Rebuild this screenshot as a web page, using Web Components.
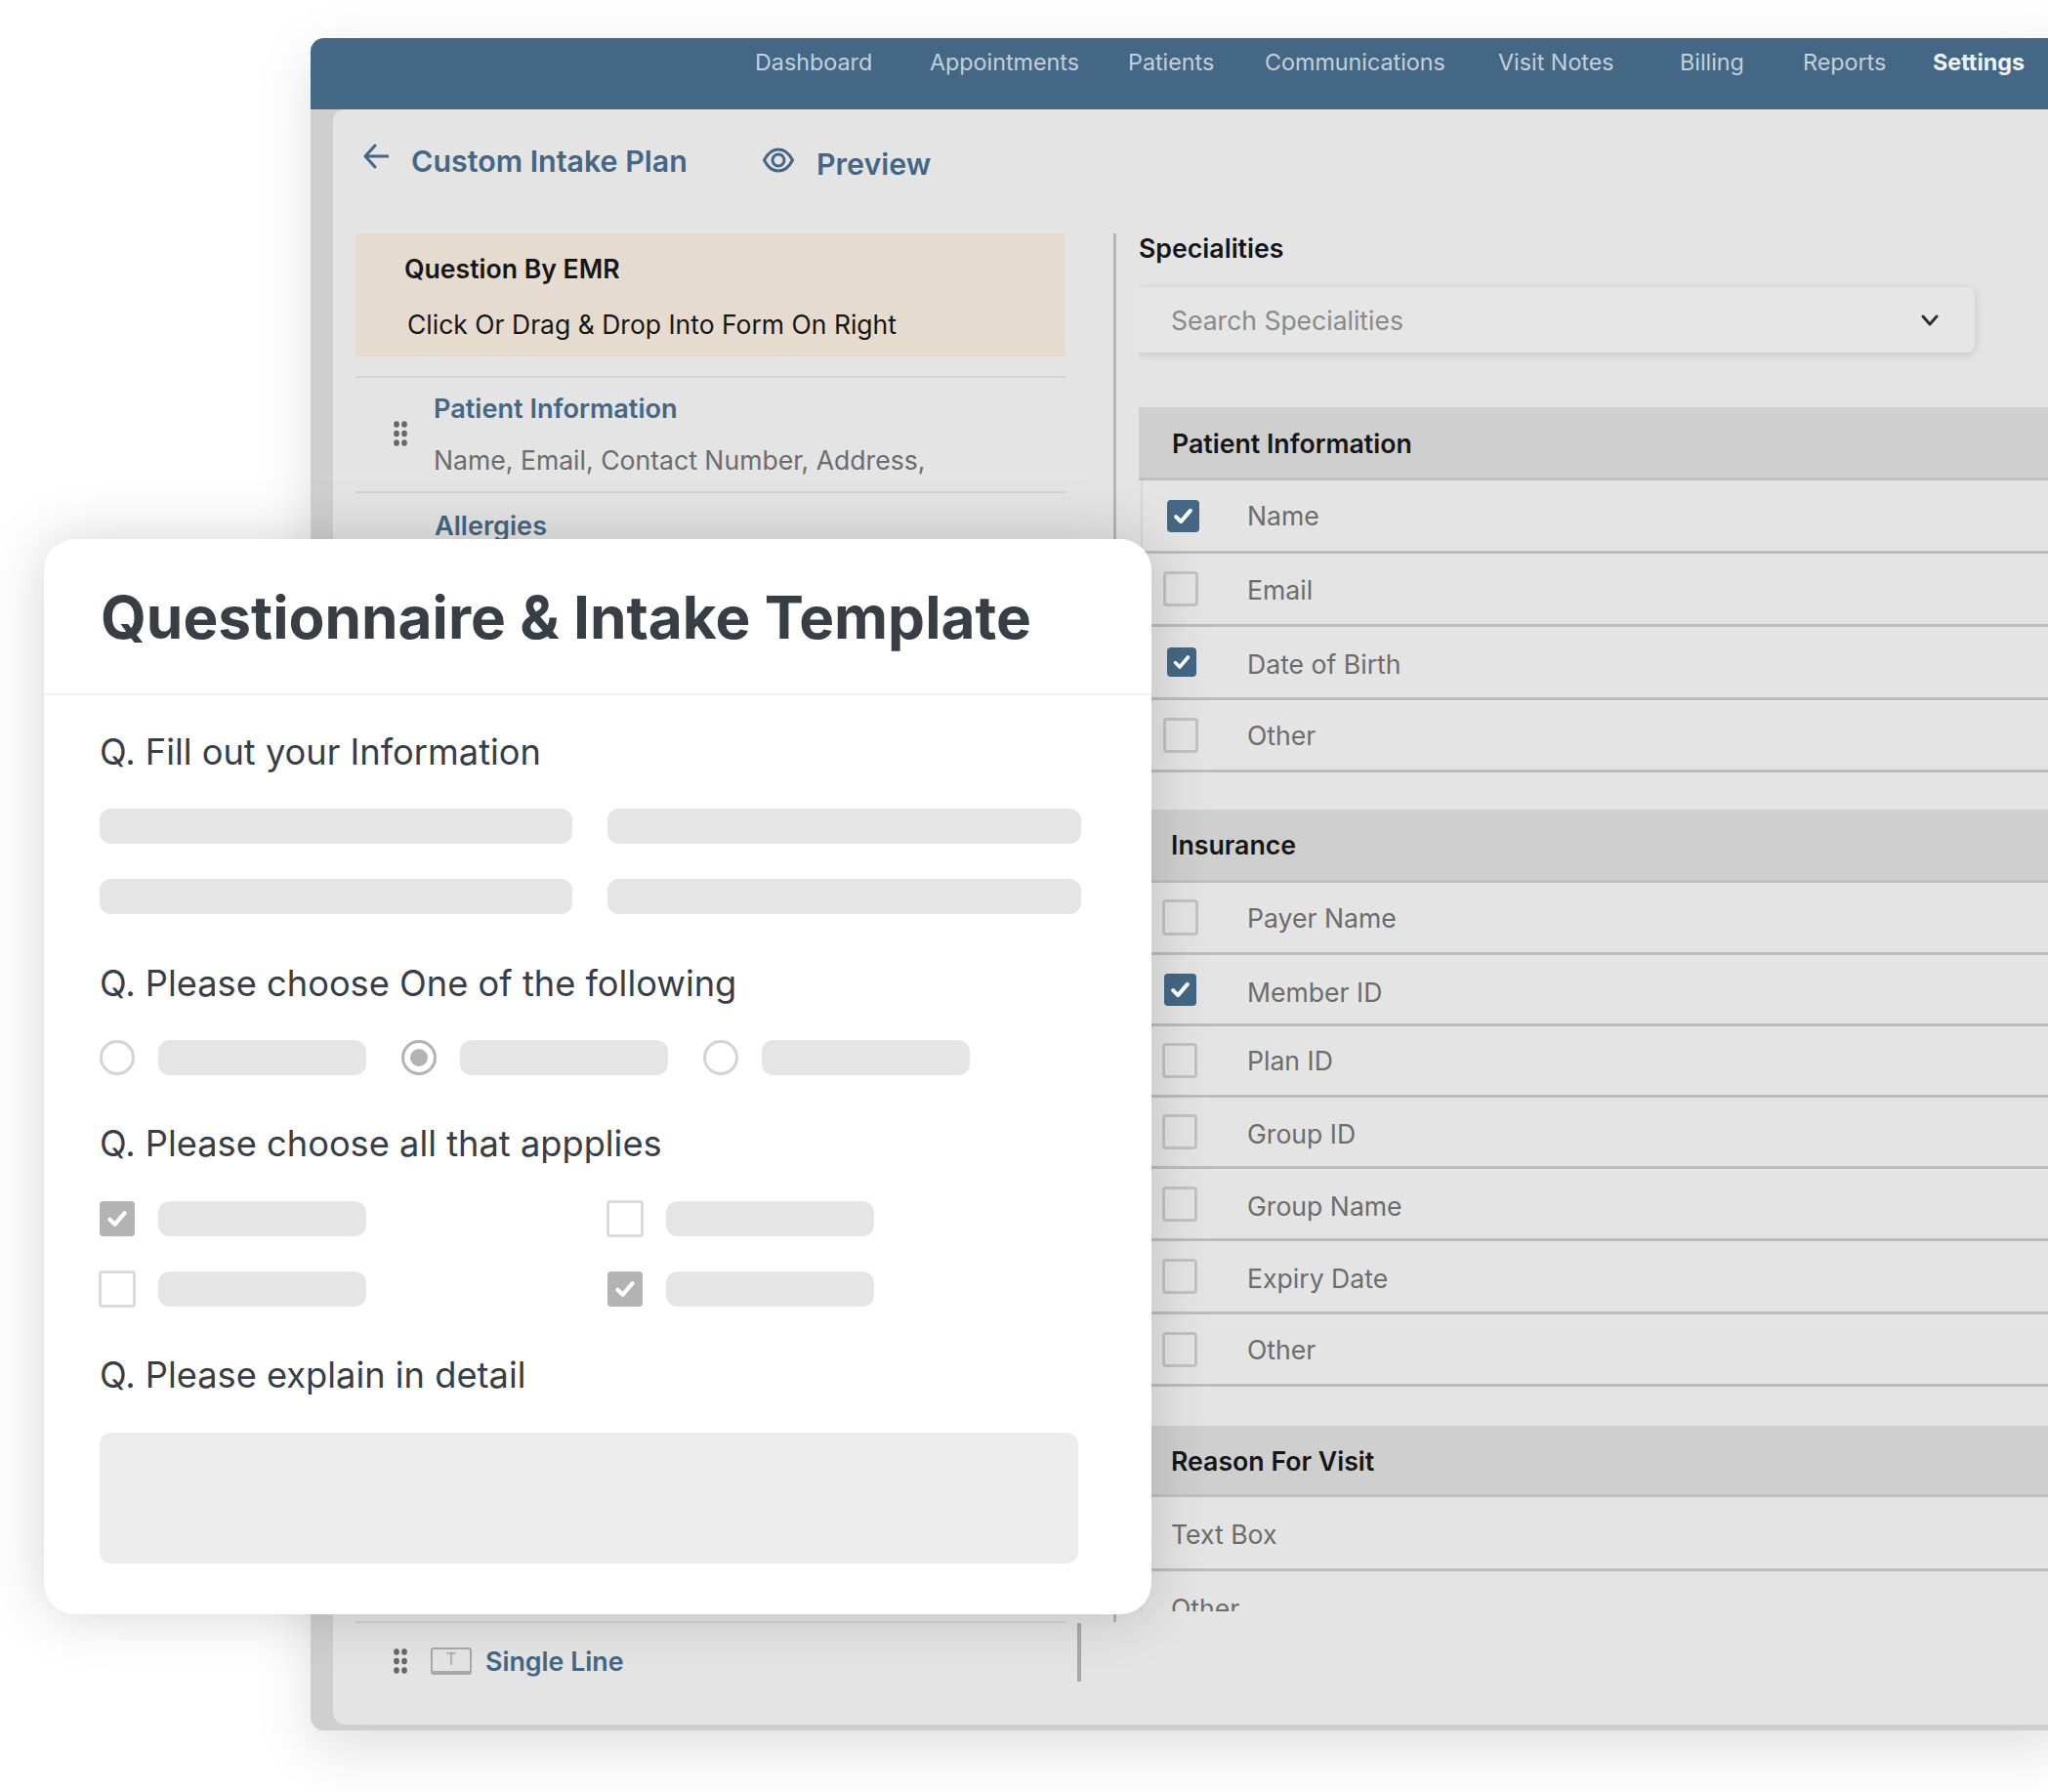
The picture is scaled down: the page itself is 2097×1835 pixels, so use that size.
<!DOCTYPE html>
<html lang="en"><head><meta charset="utf-8"><title>Questionnaire &amp; Intake Template</title>
<style>
html,body{margin:0;padding:0;height:1835px;overflow:hidden;background:#fff;font-family:Inter,"Liberation Sans",sans-serif}
body{position:relative;padding:39px 0 0 318px;box-sizing:border-box}
</style></head><body>
<app-window>
  <top-nav slot="nav"></top-nav>
  <plan-head slot="head"></plan-head>
  <left-panel slot="left">
    <emr-banner></emr-banner>
    <field-item title="Patient Information" desc="Name, Email, Contact Number, Address,"></field-item>
    <field-stub title="Allergies"></field-stub>
    <single-line></single-line>
  </left-panel>
  <right-panel slot="right">
    <spec-search></spec-search>
    <spec-section title="Patient Information" tx="35" hh="75" ty="1">
      <check-row h="75" dx="25" on s="33" ty="-1">Name</check-row>
      <check-row h="75" dx="21" s="36">Email</check-row>
      <check-row h="75" dx="25" on s="30" ty="1">Date of Birth</check-row>
      <check-row h="74" dx="21" s="36" ty="-1">Other</check-row>
    </spec-section>
    <spec-section title="Insurance" tx="34" hh="75" mt="38">
      <check-row h="74" dx="20" s="37" ty="-1">Payer Name</check-row>
      <check-row h="73" dx="22" on s="33" ty="2">Member ID</check-row>
      <check-row h="73" dx="20" s="36" ty="-1">Plan ID</check-row>
      <check-row h="73" dx="20" s="36" ty="1">Group ID</check-row>
      <check-row h="74" dx="20" s="36" ty="1">Group Name</check-row>
      <check-row h="75" dx="20" s="36" ty="1">Expiry Date</check-row>
      <check-row h="74" dx="20" s="36" ty="-1">Other</check-row>
    </spec-section>
    <spec-section title="Reason For Visit" tx="34" hh="73" mt="40" ty="1">
      <check-row h="76" plain>Text Box</check-row>
      <check-row h="76" plain>Other</check-row>
    </spec-section>
  </right-panel>
</app-window>
<intake-card>
  <q-title mt="36">Q. Fill out your Information</q-title>
  <skel-grid></skel-grid>
  <q-title mt="49">Q. Please choose One of the following</q-title>
  <radio-row></radio-row>
  <q-title mt="48">Q. Please choose all that appplies</q-title>
  <check-grid></check-grid>
  <q-title mt="48">Q. Please explain in detail</q-title>
  <text-skel></text-skel>
</intake-card>

<script>
const SHADOW_MODE={mode:'open'};
function def(name,css,html,init){
  customElements.define(name,class extends HTMLElement{
    constructor(){super();this.attachShadow(SHADOW_MODE);}
    connectedCallback(){
      const h=typeof html==='function'?html(this):html;
      this.shadowRoot.innerHTML=`<style>${css}</style>${h}`;
      if(init)init(this);
    }
  });
}
const CHECK=c=>`<svg viewBox="0 0 24 24" width="100%" height="100%" style="display:block"><path d="M5.5 12.6l4.4 4.4 8.6-10" fill="none" stroke="${c}" stroke-width="3.6" stroke-linecap="round" stroke-linejoin="round"/></svg>`;
const GRIP=`<svg width="14" height="26" viewBox="0 0 14 26" style="display:block"><g fill="#666"><ellipse cx="3" cy="3.5" rx="2.8" ry="3.2"/><ellipse cx="11" cy="3.5" rx="2.8" ry="3.2"/><ellipse cx="3" cy="13" rx="2.8" ry="3.2"/><ellipse cx="11" cy="13" rx="2.8" ry="3.2"/><ellipse cx="3" cy="22.5" rx="2.8" ry="3.2"/><ellipse cx="11" cy="22.5" rx="2.8" ry="3.2"/></g></svg>`;

def('app-window',`
:host{display:flex;flex-direction:column;width:1800px;height:1733px;background:#cfcfcf;border-radius:14px 0 0 14px;box-shadow:0 18px 60px rgba(0,0,0,.13)}
.top{height:73px;background:#436784;border-radius:14px 0 0 0;flex:none}
.panel{flex:1;margin:0 0 6px 23px;background:#e4e4e4;border-radius:12px 0 0 12px;display:flex;flex-direction:column;padding-left:23px;min-height:0}
.cols{display:flex;align-items:flex-start}
`,`<div class="top"><slot name="nav"></slot></div><div class="panel"><slot name="head"></slot><div class="cols"><slot name="left"></slot><slot name="right"></slot></div></div>`);

def('top-nav',`
:host{display:grid;grid-template-columns:179px 203px 140px 239px 186px 126px 133px auto;padding:12px 0 0 455px;font-size:23.3px;line-height:26px;color:#c3d0dc}
b{color:#f0f3f6;font-weight:700}
span{white-space:nowrap}
`,`<span>Dashboard</span><span>Appointments</span><span>Patients</span><span>Communications</span><span>Visit Notes</span><span>Billing</span><span>Reports</span><b>Settings</b>`);

def('plan-head',`
:host{display:flex;align-items:flex-start;height:127px;color:#436784;font-weight:600;font-size:30.4px;line-height:36px;box-sizing:border-box;padding:34px 0 0 8px}
svg{display:block;flex:none}
.t{margin-left:23px;margin-top:1px;white-space:nowrap;width:360px}
.p{margin-left:23px;margin-top:4px}
.e{margin-top:5px}
`,`<svg width="26" height="30" viewBox="0 0 26 30"><path d="M12 3L2 14l10 11M2 14h23" fill="none" stroke="#436784" stroke-width="3" stroke-linecap="round" stroke-linejoin="round"/></svg>
<div class="t">Custom Intake Plan</div>
<svg class="e" width="32" height="26" viewBox="0 0 32 26"><path d="M1.5 13C5 6 10 2 16 2S27 6 30.5 13C27 20 22 24 16 24S5 20 1.5 13Z" fill="none" stroke="#436784" stroke-width="3"/><circle cx="16" cy="13" r="6" fill="none" stroke="#436784" stroke-width="3"/></svg>
<div class="p">Preview</div>`);

def('left-panel',`:host{display:flex;flex-direction:column;width:743px;flex:none;margin-right:33px;height:1483px}`,`<slot></slot>`);

def('emr-banner',`
:host{display:block;width:727px;height:126px;background:#e5dbcf;box-sizing:border-box;padding:20px 0 0 50px;color:#161616;font-size:26.6px;line-height:32px;margin-bottom:20px}
.a{font-weight:600}
.b{margin:25px 0 0 3px;font-size:26.5px}
`,`<div class="a">Question By EMR</div><div class="b">Click Or Drag &amp; Drop Into Form On Right</div>`);

def('field-item',`
:host{display:flex;width:727px;height:120px;border-top:2px solid #d3d3d3;border-bottom:2px solid #d3d3d3;box-sizing:border-box;padding-left:39px}
.g{align-self:center;margin-top:-1px}
.c{margin-left:27px;font-size:26.6px;line-height:32px;padding-top:16px}
.t{color:#436784;font-weight:600;white-space:nowrap;font-size:27.1px}
.d{color:#6c6c6c;margin-top:20px;white-space:nowrap}
`,el=>`<div class="g">${GRIP}</div><div class="c"><div class="t">${el.getAttribute('title')}</div><div class="d">${el.getAttribute('desc')}</div></div>`);

def('field-stub',`
:host{display:block;height:1158px;width:727px;padding:18px 0 0 81px;box-sizing:border-box;color:#436784;font-weight:600;font-size:27.1px;line-height:32px}
`,el=>`${el.getAttribute('title')}`);

def('single-line',`
:host{display:flex;align-items:center;height:60px;width:743px;box-sizing:border-box;border-right:4px solid #a8a8a8;position:relative;color:#436784;font-weight:600;font-size:26.8px;padding:17px 0 0 39px}
.line{position:absolute;left:0;top:-2px;width:727px;height:2px;background:#d3d3d3}
.ico{margin-left:24px;width:42px;height:28px;border:2px solid #a8a8a8;border-bottom-width:4px;border-radius:3px;box-sizing:border-box;display:flex;align-items:center;justify-content:center;color:#a8a8a8;font-size:17px;font-weight:400;line-height:1}
.t{margin-left:14px;white-space:nowrap}
`,`<div class="line"></div>${GRIP}<div class="ico">T</div><div class="t">Single Line</div>`);

def('right-panel',`
:host{display:block;flex:none;width:960px;height:1422px;border-left:3px solid #b5b5b5;box-sizing:border-box;padding-left:23px}
.clip{height:1411px;overflow:hidden}
h3{margin:0;font-size:26.7px;line-height:30px;font-weight:600;color:#161616}
`,`<div class="clip"><h3>Specialities</h3><slot></slot></div>`);

def('spec-search',`
:host{display:flex;align-items:center;justify-content:space-between;width:859px;height:67px;margin:25px 0 56px -3px;background:#e6e6e6;border-radius:8px;box-shadow:0 2px 10px rgba(0,0,0,.14);box-sizing:border-box;padding:0 36px 0 36px;color:#8a8a8a;font-size:26.5px}
svg{display:block}
`,`<span>Search Specialities</span><svg width="20" height="14" viewBox="0 0 20 14"><path d="M3 3l7 8 7-8" fill="none" stroke="#2f2f2f" stroke-width="3" stroke-linecap="round" stroke-linejoin="round"/></svg>`);

def('spec-section',`
:host{display:block}
.h{background:#cfcfcf;border-bottom:3px solid #c0c0c0;box-sizing:border-box;display:flex;align-items:center;color:#161616;font-weight:600;font-size:26.7px;line-height:30px}
.h span{margin-top:var(--ty,0)}
.b{margin-left:2px;border-left:2px solid #d6d6d6}
`,el=>`<div class="h" style="--ty:${(+el.getAttribute('ty')||0)*2}px;height:${el.getAttribute('hh')}px;padding-left:${(+el.getAttribute('tx'))-1}px;margin-top:${el.getAttribute('mt')||0}px"><span>${el.getAttribute('title')}</span></div><div class="b"><slot></slot></div>`);

def('check-row',`
:host{display:flex;align-items:center;border-bottom:3px solid #bcbcbc;box-sizing:border-box;color:#6c6c6c;font-size:26.6px;position:relative}
.t{position:absolute;left:107px;white-space:nowrap;top:50%;transform:translateY(-47%)}
.t.p{left:29px}
.c{box-sizing:border-box;border-radius:4px;flex:none}
.on{background:#436784;padding:3px}
.off{border:3px solid #c2c2c2}
`,el=>{
  el.style.height=el.getAttribute('h')+'px';
  const ty=el.getAttribute('ty')||0;
  if(el.hasAttribute('plain'))return `<div class="t p"><slot></slot></div>`;
  const on=el.hasAttribute('on'),s=+el.getAttribute('s');
  return `<div class="c ${on?'on':'off'}" style="width:${s}px;height:${s}px;margin-left:${el.getAttribute('dx')}px">${on?CHECK('#fff'):''}</div><div class="t" style="margin-top:${ty}px"><slot></slot></div>`;
});

def('intake-card',`
:host{position:absolute;left:45px;top:552px;width:1134px;height:1101px;background:#fff;border-radius:32px;box-shadow:0 0 60px rgba(0,0,0,.17);overflow:hidden;color:#373e45}
h1{margin:0;height:160px;box-sizing:border-box;border-bottom:2px solid #f0f0f0;padding:2px 0 0 58px;display:flex;align-items:center;font-size:60.3px;font-weight:700;color:#373e45;white-space:nowrap}
.b{padding:0 0 0 57px}
`,`<h1>Questionnaire &amp; Intake Template</h1><div class="b"><slot></slot></div>`);

def('q-title',`
:host{display:block;font-size:36.25px;line-height:44px;color:#373e45;white-space:nowrap}
`,el=>{el.style.marginTop=el.getAttribute('mt')+'px';return `<slot></slot>`;});

const SK=`background:#e5e5e5;border-radius:12px;height:36px;`;
def('skel-grid',`
:host{display:grid;grid-template-columns:484px 485px;column-gap:36px;row-gap:36px;margin-top:36px}
i{display:block;${SK}}
`,`<i></i><i></i><i></i><i></i>`);

const RADIO=(on)=>`<svg width="36" height="36" viewBox="0 0 36 36" style="display:block;flex:none"><circle cx="18" cy="18" r="16.5" fill="none" stroke="${on?'#b3b3b3':'#d4d4d4'}" stroke-width="3"/>${on?'<circle cx="18" cy="18" r="9" fill="#b3b3b3"/>':''}</svg>`;
def('radio-row',`
:host{display:flex;align-items:center;margin-top:36px}
i{display:block;${SK}width:213px;margin:0 36px 0 24px;flex:none}
`,`${RADIO(0)}<i></i>${RADIO(1)}<i></i>${RADIO(0)}<i></i>`);

const BOX=(on)=>on?`<div style="width:36px;height:36px;border-radius:4px;background:#b3b3b3;padding:4px;box-sizing:border-box;flex:none">${CHECK('#fff')}</div>`:`<div style="width:38px;height:38px;margin:-1px;border:3px solid #dadada;border-radius:4px;box-sizing:border-box;flex:none"></div>`;
def('check-grid',`
:host{display:grid;grid-template-columns:520px auto;row-gap:36px;margin-top:37px}
div.r{display:flex;align-items:center}
i{display:block;${SK}width:213px;margin-left:24px;flex:none}
`,`<div class="r">${BOX(1)}<i></i></div><div class="r">${BOX(0)}<i></i></div><div class="r">${BOX(0)}<i></i></div><div class="r">${BOX(1)}<i></i></div>`);

def('text-skel',`:host{display:block;width:1002px;height:134px;background:#ececec;border-radius:12px;margin-top:37px}`,``);
</script>
</body></html>
